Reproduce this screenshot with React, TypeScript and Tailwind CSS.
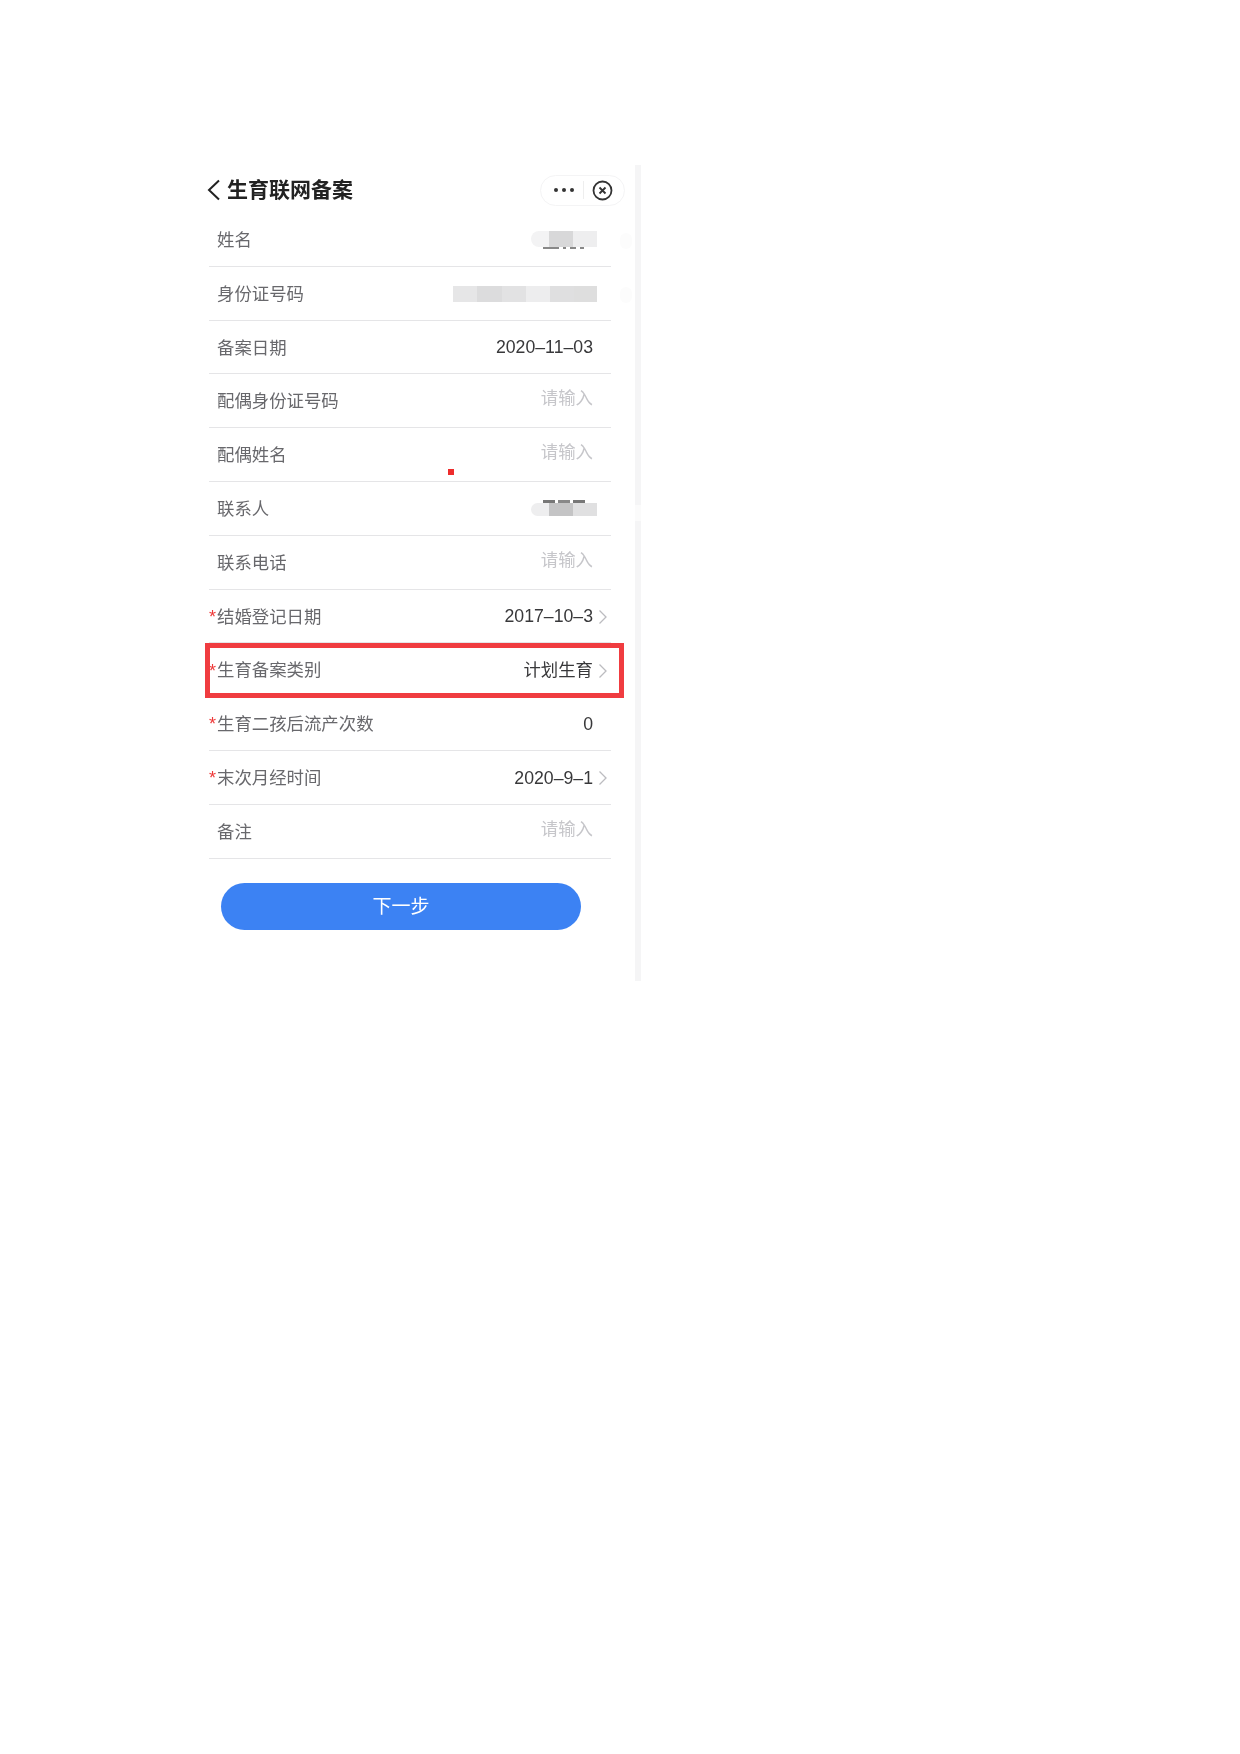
import { ReactNode } from "react";

const cjk = "font-['Liberation_Sans','Noto_Sans_CJK_SC',sans-serif]";

function Chevron() {
  return (
    <svg width="10" height="16" viewBox="0 0 10 16" fill="none" stroke="#bcbcc0" strokeWidth="1.3">
      <path d="M1.5 1.5 L8 8 L1.5 14.5" />
    </svg>
  );
}

function Mosaic({ tiles, height, fragment }: { tiles: [number, string][]; height: number; fragment?: "top" | "bottom" }) {
  return (
    <div className="relative flex mr-[-4px]" style={{ height }}>
      {fragment === "top" && (
        <div className="absolute -top-[3px] left-[12px] right-[12px] h-[3px] flex gap-[3px]">
          <div className="flex-1 bg-[#777777]" />
          <div className="flex-1 bg-[#888888]" />
          <div className="flex-1 bg-[#777777]" />
        </div>
      )}
      {fragment === "bottom" && (
        <div className="absolute -bottom-[2px] left-[12px] right-[10px] h-[2px] flex gap-[4px]">
          <div className="w-[16px] bg-[#888888]" />
          <div className="w-[3px] bg-[#888888]" />
          <div className="w-[6px] bg-[#888888]" />
          <div className="w-[4px] bg-[#888888]" />
        </div>
      )}
      {tiles.map(([w, c], i) => (
        <div key={i} style={{ width: w, backgroundColor: c }} className={i === 0 && tiles.length === 3 ? "rounded-l-full" : ""} />
      ))}
    </div>
  );
}

interface RowProps {
  label: string;
  required?: boolean;
  children?: ReactNode;
  chevron?: boolean;
  highlight?: boolean;
  dot?: boolean;
  ghost?: boolean;
}

function Row({ label, required, children, chevron, highlight, dot, ghost }: RowProps) {
  return (
    <div className="relative flex items-center h-[53.8px] pt-[1.5px] border-b-[1.5px] border-[#e5e5e7]">
      <span className="w-[8px] text-[18px] leading-none text-[#ee3a3a]">{required ? "*" : ""}</span>
      <span className="text-[17.4px] text-[#68686c]">{label}</span>
      <div className="ml-auto flex items-center">{children}</div>
      <div className="w-[18px] flex justify-end pr-[3px]">{chevron && <Chevron />}</div>
      {ghost && <div className="absolute left-[411px] top-[20px] w-[12px] h-[16px] rounded-full bg-[#fcfcfc]" />}
      {highlight && <div className="absolute -left-[4px] -right-[13px] top-[0px] -bottom-[2px] border-[5px] border-[#f03c40]" />}
      {dot && <div className="absolute left-[239px] bottom-[6px] w-[6px] h-[6px] bg-[#ee2c2c]" />}
    </div>
  );
}

function Placeholder() {
  return <span className="text-[17.4px] text-[#c6c6ca] -translate-y-[3px]">请输入</span>;
}

function Value({ children }: { children: ReactNode }) {
  return <span className="text-[17.7px] text-[#38383a]">{children}</span>;
}

export default function App() {
  return (
    <div className={`w-full h-[1754px] bg-white flex pt-[165px] pl-[205px] ${cjk} blur-[0.6px]`}>
      <div className="w-[430px] flex flex-col">
        <div className="h-[48px] flex items-center pt-[2px] pl-[1px] pr-[10px]">
          <svg width="15" height="22" viewBox="0 0 15 22" fill="none" stroke="#222222" strokeWidth="2">
            <path d="M13 1.5 L3 11 L13 20.5" />
          </svg>
          <span className="ml-[6px] text-[21px] font-bold text-[#222222]">生育联网备案</span>
          <div className="ml-auto w-[85px] h-[31px] rounded-full border border-[#f4f4f5] flex items-center">
            <div className="flex gap-[4px] ml-[13px]">
              <div className="w-[4px] h-[4px] rounded-full bg-[#333333]" />
              <div className="w-[4px] h-[4px] rounded-full bg-[#333333]" />
              <div className="w-[4px] h-[4px] rounded-full bg-[#333333]" />
            </div>
            <div className="ml-[9px] w-px h-[18px] bg-[#eeeeee]" />
            <svg className="ml-[8px]" width="21" height="21" viewBox="0 0 21 21" fill="none" stroke="#333333">
              <circle cx="10.5" cy="10.5" r="9" strokeWidth="1.8" />
              <path d="M7.5 7.5 L13.5 13.5 M13.5 7.5 L7.5 13.5" strokeWidth="1.8" />
            </svg>
          </div>
        </div>

        <div className="ml-[4px] w-[402px]">
          <Row label="姓名" ghost>
            <div className="-translate-y-[1px]">
              <Mosaic height={16} fragment="bottom" tiles={[[18, "#f3f3f4"], [24, "#d8d8d9"], [24, "#eeeeef"]]} />
            </div>
          </Row>
          <Row label="身份证号码" ghost>
            <Mosaic
              height={16}
              tiles={[[24, "#e6e6e7"], [25, "#dcdcdd"], [24, "#e2e2e3"], [24, "#ededee"], [24, "#dfdfe0"], [23, "#dedede"]]}
            />
          </Row>
          <Row label="备案日期">
            <Value>2020–11–03</Value>
          </Row>
          <Row label="配偶身份证号码">
            <Placeholder />
          </Row>
          <Row label="配偶姓名" dot>
            <Placeholder />
          </Row>
          <Row label="联系人">
            <Mosaic height={13} fragment="top" tiles={[[18, "#eeeeef"], [24, "#c4c4c5"], [24, "#e0e0e1"]]} />
          </Row>
          <Row label="联系电话">
            <Placeholder />
          </Row>
          <Row label="结婚登记日期" required chevron>
            <Value>2017–10–3</Value>
          </Row>
          <Row label="生育备案类别" required chevron highlight>
            <span className="text-[17.4px] text-[#38383a]">计划生育</span>
          </Row>
          <Row label="生育二孩后流产次数" required>
            <Value>0</Value>
          </Row>
          <Row label="末次月经时间" required chevron>
            <Value>2020–9–1</Value>
          </Row>
          <Row label="备注">
            <Placeholder />
          </Row>
        </div>

        <button className="mt-[24px] ml-[16px] w-[360px] h-[47px] pt-[3px] rounded-full bg-[#3c82f3] text-white text-[19px]">下一步</button>
      </div>
      <div className="w-[6px] h-[816px] flex flex-col">
        <div className="h-[340px] bg-[#f5f5f6]" />
        <div className="h-[16px] bg-[#fbfbfb]" />
        <div className="flex-1 bg-[#f5f5f6]" />
      </div>
    </div>
  );
}
